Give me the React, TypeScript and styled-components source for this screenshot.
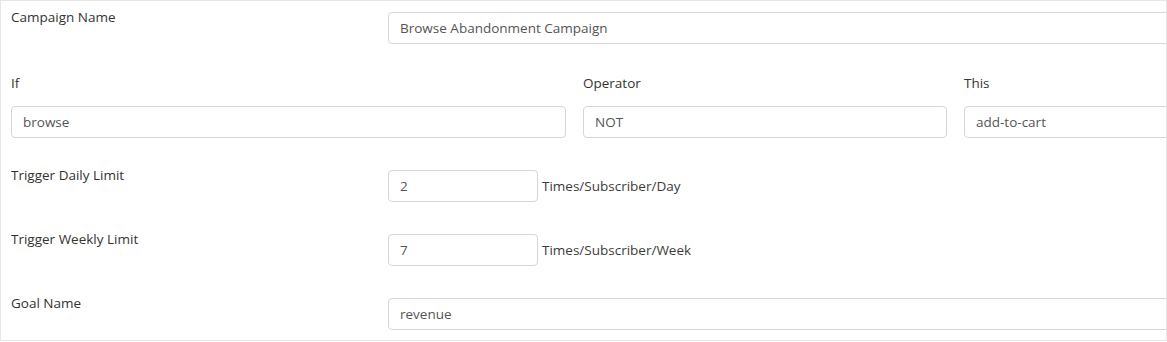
import React from "react";
import styled, { createGlobalStyle } from "styled-components";

const Global = createGlobalStyle`
  html, body { margin: 0; padding: 0; background: #ffffff; }
  body { font-family: "Open Sans", "Noto Sans", sans-serif; }
  * { box-sizing: border-box; }
`;

const Panel = styled.div`
  width: 1167px;
  height: 341px;
  border: 1px solid #e6e6e6;
  overflow: hidden;
  background: #fff;
  padding: 6px 0 0 10px;
`;

const Inner = styled.div`
  width: 1200px;
  display: flex;
  flex-direction: column;
`;

const Row = styled.div<{ $gap?: number }>`
  display: flex;
  align-items: flex-start;
  margin-top: ${(p) => p.$gap ?? 0}px;
`;

const Label = styled.div<{ $width?: number }>`
  font-size: 13.5px;
  line-height: 20px;
  color: #333333;
  width: ${(p) => (p.$width ? `${p.$width}px` : "auto")};
  flex: none;
`;

const Field = styled.div`
  flex: 1;
  display: flex;
  align-items: center;
  margin-top: 5px;
`;

const Input = styled.input<{ $width?: number }>`
  height: 32px;
  width: ${(p) => (p.$width ? `${p.$width}px` : "100%")};
  flex: ${(p) => (p.$width ? "none" : "1")};
  border: 1px solid #d6d6d6;
  border-radius: 4px;
  padding: 0 11px;
  font-family: "Open Sans", "Noto Sans", sans-serif;
  font-size: 13.5px;
  color: #555555;
  background: #fff;
  outline: none;
`;

const ColInput = styled(Input)`
  flex: none;
`;

const Unit = styled.span`
  font-size: 13.5px;
  color: #3c3c3c;
  margin-left: 4px;
  white-space: nowrap;
`;

const Columns = styled.div`
  display: grid;
  grid-template-columns: 555px 364px 1fr;
  column-gap: 17px;
  margin-top: 29px;
`;

const Column = styled.div`
  display: flex;
  flex-direction: column;
`;

const ColLabel = styled(Label)`
  margin-bottom: 13px;
`;

export default function App() {
  return (
    <>
      <Global />
      <Panel>
        <Inner>
          <Row>
            <Label $width={377}>Campaign Name</Label>
            <Field>
              <Input readOnly defaultValue="Browse Abandonment Campaign" />
            </Field>
          </Row>
          <Columns>
            <Column>
              <ColLabel>If</ColLabel>
              <ColInput readOnly defaultValue="browse" />
            </Column>
            <Column>
              <ColLabel>Operator</ColLabel>
              <ColInput readOnly defaultValue="NOT" />
            </Column>
            <Column>
              <ColLabel>This</ColLabel>
              <ColInput readOnly defaultValue="add-to-cart" />
            </Column>
          </Columns>
          <Row $gap={27}>
            <Label $width={377}>Trigger Daily Limit</Label>
            <Field>
              <Input readOnly $width={150} defaultValue="2" />
              <Unit>Times/Subscriber/Day</Unit>
            </Field>
          </Row>
          <Row $gap={27}>
            <Label $width={377}>Trigger Weekly Limit</Label>
            <Field>
              <Input readOnly $width={150} defaultValue="7" />
              <Unit>Times/Subscriber/Week</Unit>
            </Field>
          </Row>
          <Row $gap={27}>
            <Label $width={377}>Goal Name</Label>
            <Field>
              <Input readOnly defaultValue="revenue" />
            </Field>
          </Row>
        </Inner>
      </Panel>
    </>
  );
}
